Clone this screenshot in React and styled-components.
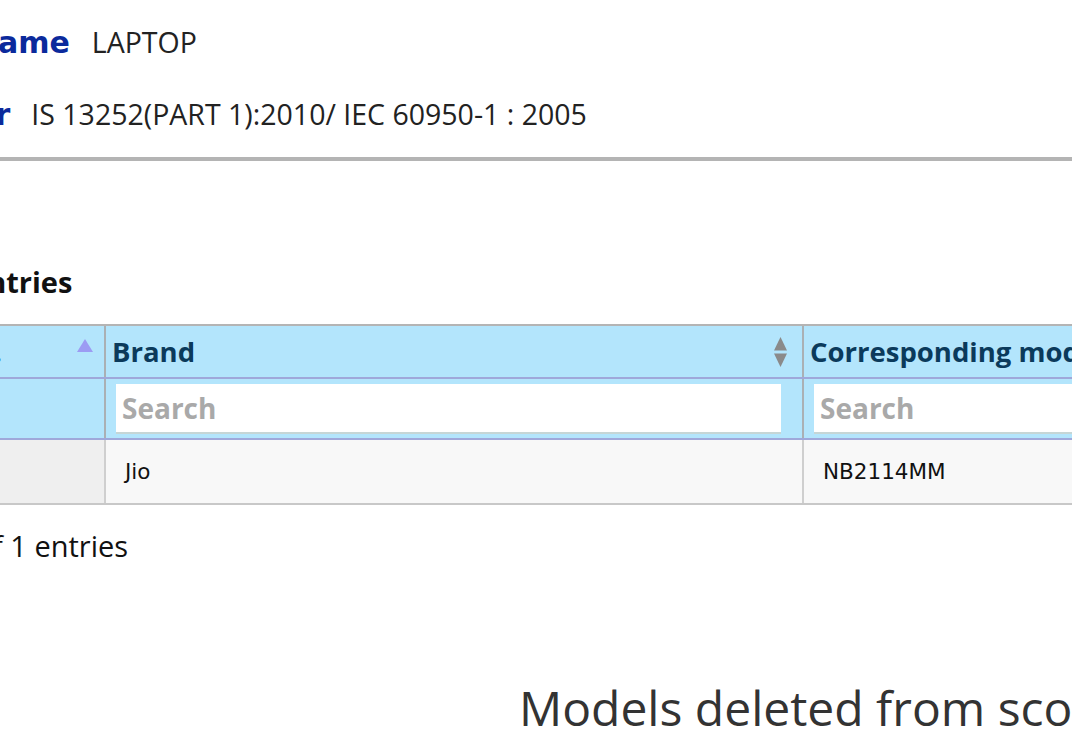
import React from 'react';
import styled, { createGlobalStyle } from 'styled-components';

const GlobalStyle = createGlobalStyle`
  html, body {
    margin: 0;
    padding: 0;
    background: #fff;
    overflow: hidden;
  }
  body {
    font-family: "Open Sans", "Liberation Sans", sans-serif;
    color: #222;
  }
`;

const Page = styled.div`
  width: 1072px;
  height: 738px;
  overflow: hidden;
  display: flow-root;
`;

const InfoRow = styled.div`
  display: flex;
  align-items: center;
  height: 72px;
  margin-left: ${({ shift }) => shift}px;
  margin-top: ${({ top }) => top || 0}px;
  gap: ${({ gap }) => gap}px;
  white-space: nowrap;
  font-size: 28.5px;
`;

const InfoLabel = styled.span`
  font-family: "DejaVu Sans", Verdana, sans-serif;
  font-size: 30px;
  font-weight: 700;
  color: #0b2a9c;
`;

const InfoValue = styled.span`
  color: #222;
`;

const Divider = styled.div`
  margin-top: 7px;
  height: 4px;
  background: #b4b4b4;
`;

const Caption = styled.div`
  margin-top: ${({ top }) => top}px;
  margin-left: ${({ shift }) => shift}px;
  line-height: 36px;
  font-size: 29px;
  font-weight: ${({ bold }) => (bold ? 700 : 400)};
  color: #111;
  white-space: nowrap;
`;

const TableWrap = styled.div`
  margin-top: 24px;
  margin-left: ${({ shift }) => shift}px;
`;

const Table = styled.table`
  width: ${({ width }) => width}px;
  border-collapse: collapse;
  table-layout: fixed;
`;

const HeadCell = styled.th`
  position: relative;
  height: 51px;
  padding: 0 34px 0 6px;
  background: #b3e5fc;
  border-top: 2px solid #b4b4b4;
  border-left: 2px solid #aab0b4;
  border-bottom: 2px solid #9fa8da;
  text-align: left;
  font-size: 27.5px;
  font-weight: 700;
  color: #0b3a5b;
  white-space: nowrap;
  overflow: hidden;
`;

const SortIcon = styled.svg`
  position: absolute;
  right: ${({ right }) => right}px;
  top: ${({ top }) => top}px;
`;

const FilterCell = styled.td`
  height: 59px;
  padding: 0 21px 0 10px;
  background: #b3e5fc;
  border-left: 2px solid #aab0b4;
  border-bottom: 2px solid #9fa8da;
`;

const SearchInput = styled.input`
  display: block;
  box-sizing: border-box;
  width: 100%;
  height: 50px;
  border: 0;
  border-bottom: 2px solid #c6d6d6;
  outline: none;
  background: #fff;
  padding: 0 6px;
  font-family: "Open Sans", "Liberation Sans", sans-serif;
  font-size: 28px;
  font-weight: 700;
  color: #333;
  &::placeholder {
    color: #a9a9a9;
  }
`;

const BodyCell = styled.td`
  height: 63px;
  padding: 0 19px;
  background: ${({ sorted }) => (sorted ? '#efefef' : '#f8f8f8')};
  border-left: 2px solid #cfcfcf;
  border-bottom: 2px solid #c8c8c8;
  font-family: "DejaVu Sans", Verdana, sans-serif;
  font-size: 21.5px;
  color: #111;
  white-space: nowrap;
`;

const Heading = styled.h2`
  margin: 111px 0 0 519px;
  font-size: 48px;
  font-weight: 400;
  line-height: normal;
  color: #333;
  white-space: nowrap;
`;

const SortAsc = () => (
  <SortIcon right={11} top={13} width="16" height="14" viewBox="0 0 16 14">
    <polygon points="8,0 16,13 0,13" fill="#9c9cf3" />
  </SortIcon>
);

const SortBoth = () => (
  <SortIcon right={15} top={11} width="13" height="30" viewBox="0 0 13 30">
    <polygon points="6.5,0 13,13.5 0,13.5" fill="#8a8a8a" />
    <polygon points="0,16.5 13,16.5 6.5,30" fill="#8a8a8a" />
  </SortIcon>
);

const columns = [
  { title: 'Sr. No.', width: 200, sort: 'asc', filter: false },
  { title: 'Brand', width: 698, sort: 'both', filter: true },
  { title: 'Corresponding model / series', width: 520, sort: 'both', filter: true },
];

const tableWidth = columns.reduce((sum, col) => sum + col.width, 0);

const rows = [{ no: '1', brand: 'Jio', model: 'NB2114MM' }];

export default function App() {
  return (
    <Page>
      <GlobalStyle />
      <InfoRow shift={-170} top={6} gap={22}>
        <InfoLabel>Product Name</InfoLabel>
        <InfoValue>LAPTOP</InfoValue>
      </InfoRow>
      <InfoRow shift={-290} gap={21}>
        <InfoLabel>Standard Number</InfoLabel>
        <InfoValue>IS 13252(PART 1):2010/ IEC 60950-1 : 2005</InfoValue>
      </InfoRow>
      <Divider />
      <Caption bold top={103} shift={-156}>
        Show 10 entries
      </Caption>
      <TableWrap shift={-96}>
        <Table width={tableWidth}>
          <colgroup>
            {columns.map(col => (
              <col key={col.title} style={{ width: col.width }} />
            ))}
          </colgroup>
          <thead>
            <tr>
              {columns.map(col => (
                <HeadCell key={col.title}>
                  {col.title}
                  {col.sort === 'asc' ? <SortAsc /> : <SortBoth />}
                </HeadCell>
              ))}
            </tr>
            <tr>
              {columns.map(col => (
                <FilterCell key={col.title}>
                  {col.filter && <SearchInput placeholder="Search" />}
                </FilterCell>
              ))}
            </tr>
          </thead>
          <tbody>
            {rows.map(row => (
              <tr key={row.no}>
                <BodyCell sorted>{row.no}</BodyCell>
                <BodyCell>{row.brand}</BodyCell>
                <BodyCell>{row.model}</BodyCell>
              </tr>
            ))}
          </tbody>
        </Table>
      </TableWrap>
      <Caption top={23} shift={-230}>
        Showing 1 to 1 of 1 entries
      </Caption>
      <Heading>Models deleted from scope</Heading>
    </Page>
  );
}
